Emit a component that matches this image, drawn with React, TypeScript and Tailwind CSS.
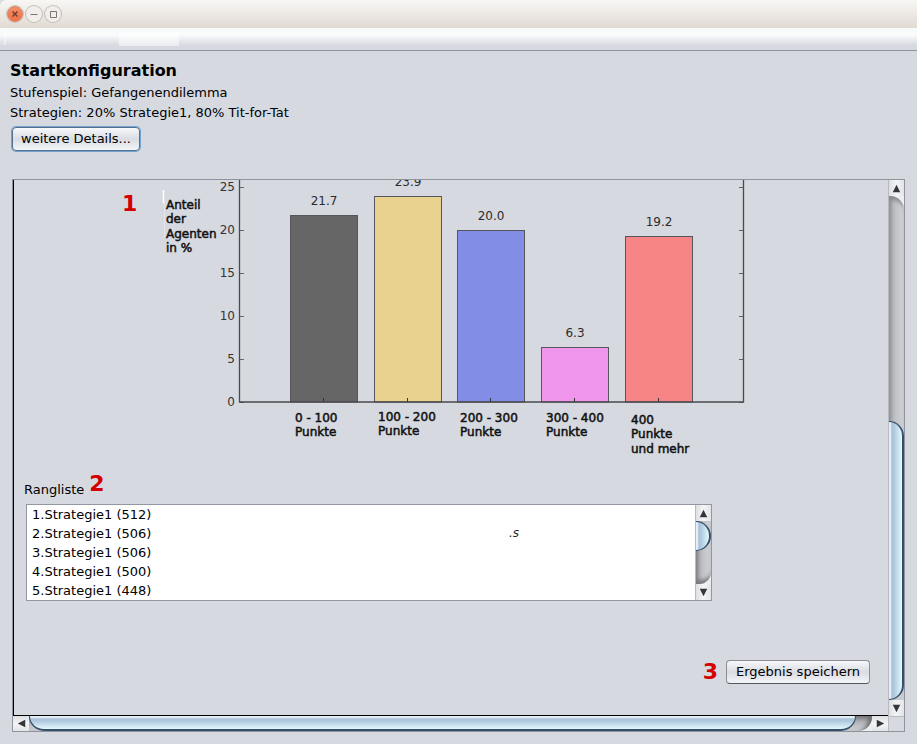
import React from "react";

const bars = [
  { x: 290, top: 216, value: "21.7", valueY: 205, fill: "#666666", label: ["0 - 100", "Punkte"], labelX: 295, labelY: 422 },
  { x: 374, top: 197, value: "23.9", valueY: 186, fill: "#e9d18f", label: ["100 - 200", "Punkte"], labelX: 378, labelY: 421 },
  { x: 457, top: 231, value: "20.0", valueY: 220, fill: "#828de6", label: ["200 - 300", "Punkte"], labelX: 460, labelY: 422 },
  { x: 541, top: 348, value: "6.3", valueY: 337, fill: "#ef95ec", label: ["300 - 400", "Punkte"], labelX: 546, labelY: 422 },
  { x: 625, top: 237, value: "19.2", valueY: 226, fill: "#f88585", label: ["400", "Punkte", "und mehr"], labelX: 631, labelY: 424 },
];

const ticks = [
  { value: 25, y: 187 },
  { value: 20, y: 230 },
  { value: 15, y: 273 },
  { value: 10, y: 316 },
  { value: 5, y: 359 },
  { value: 0, y: 402 },
];

const ranking = [512, 506, 506, 500, 448];

function ChartLabel({ x, y, lines }: { x: number; y: number; lines: string[] }) {
  return (
    <text x={x} y={y} fill="#111" stroke="#111" strokeWidth="0.5">
      {lines.map((line, i) => (
        <tspan key={line} x={x} y={y + Math.floor(i * 14.5)}>
          {line}
        </tspan>
      ))}
    </text>
  );
}

function Chart() {
  return (
    <svg
      role="img"
      aria-label="Anteil der Agenten in %"
      viewBox="160 180 590 280"
      className="h-[280px] w-[590px] shrink-0"
      fontFamily="'DejaVu Sans', sans-serif"
      fontSize="12"
    >
      <path d="M163.500 190v13" stroke="#fff" strokeWidth="1.500" />
      <path d="M164.500 200v38" stroke="#e4e6eb" />
      <ChartLabel x={166} y={209} lines={["Anteil", "der", "Agenten", "in %"]} />
      {bars.map((b) => (
        <g key={b.value}>
          <rect x={b.x + 0.5} y={b.top - 0.5} width="67" height={402.5 - b.top} fill={b.fill} stroke="#55555c" />
          <path d={`M${b.x + 33.5} 398v4`} stroke="#333" />
          <text x={b.x + 34} y={b.valueY} textAnchor="middle" fill="#2b2b2b">
            {b.value}
          </text>
          <ChartLabel x={b.labelX} y={b.labelY} lines={b.label} />
        </g>
      ))}
      {ticks.map((t) => (
        <g key={t.value}>
          <text x="235" y={t.y + 4} textAnchor="end" fill="#333">
            {t.value}
          </text>
          <path d={`M240 ${t.y + 0.5}h4M739 ${t.y + 0.5}h4`} stroke="#666" />
        </g>
      ))}
      <path d="M239.500 180v222h504V180" fill="none" stroke="#4a4a4e" strokeWidth="1.300" />
    </svg>
  );
}

const arrowPaths = {
  up: "M8 4l4 8H4z",
  down: "M8 12l4-8H4z",
  left: "M4 8l8-4v8z",
  right: "M12 8L4 4v8z",
};

function ArrowButton({ dir, label }: { dir: keyof typeof arrowPaths; label: string }) {
  const vertical = dir === "up" || dir === "down";
  return (
    <button
      type="button"
      aria-label={label}
      className={`flex shrink-0 items-center justify-center ${
        vertical
          ? "h-4 w-full bg-linear-to-r from-[#dddfe2] via-[#f4f5f6] to-[#e2e4e7]"
          : "h-full w-4 bg-linear-to-b from-[#dddfe2] via-[#f4f5f6] to-[#e2e4e7]"
      }`}
    >
      <svg viewBox="0 0 16 16" className="size-[15px]">
        <path d={arrowPaths[dir]} fill="#35363a" />
      </svg>
    </button>
  );
}

const verticalThumb =
  "rounded-r-[15px] border-y border-r-2 border-[#35506b] bg-linear-to-r from-[#c3d2e0] via-[#a9c3d9] via-30% to-[#e4f8ff] shadow-[inset_2px_0_1px_#e6eff7]";

function Header() {
  return (
    <header>
      <div className="flex h-7 items-center gap-[3px] rounded-tl-md bg-linear-to-b from-[#f8f7f5] to-[#e2dad3] pl-[7px]">
        <button
          type="button"
          aria-label="Schließen"
          className="flex size-4 items-center justify-center rounded-full border border-[#d98563] bg-linear-to-b from-[#f58d66] to-[#ee7145] ring-1 ring-[#c9c3bd]"
        >
          <svg viewBox="0 0 16 16" className="size-4 shrink-0" stroke="#6b3a28" strokeWidth="1.400">
            <path d="M5.500 5.500l5 5M10.500 5.500l-5 5" />
          </svg>
        </button>
        <button
          type="button"
          aria-label="Minimieren"
          className="flex size-4 items-center justify-center rounded-full bg-[#f1eeeb] ring-1 ring-[#c3beb8]"
        >
          <svg viewBox="0 0 16 16" className="size-4 shrink-0" stroke="#7a756f">
            <path d="M4.500 8.500h7" />
          </svg>
        </button>
        <button
          type="button"
          aria-label="Maximieren"
          className="flex size-4 items-center justify-center rounded-full bg-[#f1eeeb] ring-1 ring-[#c3beb8]"
        >
          <svg viewBox="0 0 16 16" className="size-4 shrink-0" fill="none" stroke="#7a756f">
            <path d="M5.500 5.500h6v6h-6z" />
          </svg>
        </button>
      </div>
      <div className="flex h-[23px] border-b border-[#8f939e] bg-linear-to-b from-[#f6faf9] from-10% via-[#fbfcfc] via-30% to-[#d6d9e0] to-80%">
        <span className="ml-1 h-[17px] w-[2px] bg-white/40" />
        <span className="ml-[113px] mt-1 h-[14px] w-[60px] bg-white/50" />
      </div>
    </header>
  );
}

function Ranking() {
  return (
    <section>
      <div className="flex items-start gap-[5px] pl-[10px]">
        <h2 className="pt-[7px] leading-4">Rangliste</h2>
        <strong className="text-[22px] leading-[18px] text-[#d40000]">2</strong>
      </div>
      <div className="ml-3 mt-[6px] flex h-[97px] w-[686px] border border-[#9297a1] bg-white">
        <div className="flex flex-1 items-start">
          <ol className="flex-1 pl-[5px]">
            {ranking.map((points, i) => (
              <li key={i} className="leading-[19px]">
                {i + 1}.Strategie1 ({points})
              </li>
            ))}
          </ol>
          <span className="mr-[176px] mt-[20px] text-[12px] italic leading-4 text-[#222]">.s</span>
        </div>
        <div className="flex w-4 flex-col border-l border-[#b8babf] bg-[#eceeef]">
          <ArrowButton dir="up" label="Liste nach oben" />
          <div className="flex flex-1 flex-col rounded-br-[12px] bg-linear-to-r from-[#b3b5b9] to-[#d2d3d7] shadow-[inset_2px_-4px_4px_#77787c]">
            <div className={`h-[30px] ${verticalThumb}`} />
          </div>
          <ArrowButton dir="down" label="Liste nach unten" />
        </div>
      </div>
    </section>
  );
}

export default function App() {
  return (
    <div className="flex min-h-screen flex-col bg-[#d6d9e0] font-['DejaVu_Sans',sans-serif] text-[13px] text-black">
      <Header />
      <section className="flex flex-col items-start px-[10px] pt-2">
        <h1 className="text-base font-bold leading-6">Startkonfiguration</h1>
        <p className="leading-5">Stufenspiel: Gefangenendilemma</p>
        <p className="leading-5">Strategien: 20% Strategie1, 80% Tit-for-Tat</p>
        <button
          type="button"
          className="ml-[2px] mt-1 h-6 rounded border border-[#55718d] bg-linear-to-b from-[#f7f8fa] via-[#d9dce2] to-[#f3f5f9] px-2 ring-1 ring-[#73a4d1]"
        >
          weitere Details...
        </button>
      </section>

      <main className="mx-3 mb-3 mt-7 grid flex-1 grid-cols-[1fr_16px] grid-rows-[1fr_15px] border border-[#8f939e]">
        <div className="flex flex-col border-b border-l border-black">
          <div className="flex items-start pl-[108px]">
            <strong className="mt-3 w-[38px] text-[22px] leading-6 text-[#d40000]">1</strong>
            <Chart />
          </div>
          <div className="mt-[15px]">
            <Ranking />
          </div>
          <div className="mb-[31px] mr-[18px] mt-auto flex items-center justify-end gap-2">
            <strong className="text-[22px] leading-6 text-[#d40000]">3</strong>
            <button
              type="button"
              className="h-6 rounded border border-[#8b8e95] border-b-[#55585e] bg-linear-to-b from-[#f7f8fa] via-[#d9dce2] to-[#f3f5f9] px-[9px]"
            >
              Ergebnis speichern
            </button>
          </div>
        </div>

        <div className="flex flex-col border-l border-[#b8babf] bg-[#eceeef]">
          <ArrowButton dir="up" label="Nach oben" />
          <div className="flex flex-1 flex-col rounded-tr-[14px] bg-linear-to-r from-[#b3b5b9] to-[#d2d3d7] shadow-[inset_2px_4px_4px_#88898d]">
            <div className="flex-[225]" />
            <div className={`flex-[277] ${verticalThumb}`} />
          </div>
          <ArrowButton dir="down" label="Nach unten" />
        </div>

        <div className="flex bg-[#eceeef]">
          <ArrowButton dir="left" label="Nach links" />
          <div className="flex flex-1 rounded-br-[14px] bg-linear-to-b from-[#9c9ea3] to-[#d2d3d7] shadow-[inset_-4px_2px_4px_#6d6e72]">
            <div className="flex-[827] rounded-b-[15px] border-x border-b-2 border-[#35506b] bg-linear-to-b from-[#c3d2e0] via-[#a9c3d9] via-30% to-[#e4f8ff] shadow-[inset_0_2px_1px_#e6eff7]" />
            <div className="flex-[16]" />
          </div>
          <ArrowButton dir="right" label="Nach rechts" />
        </div>
        <div className="border-l border-t border-[#b8babf]" />
      </main>
    </div>
  );
}
